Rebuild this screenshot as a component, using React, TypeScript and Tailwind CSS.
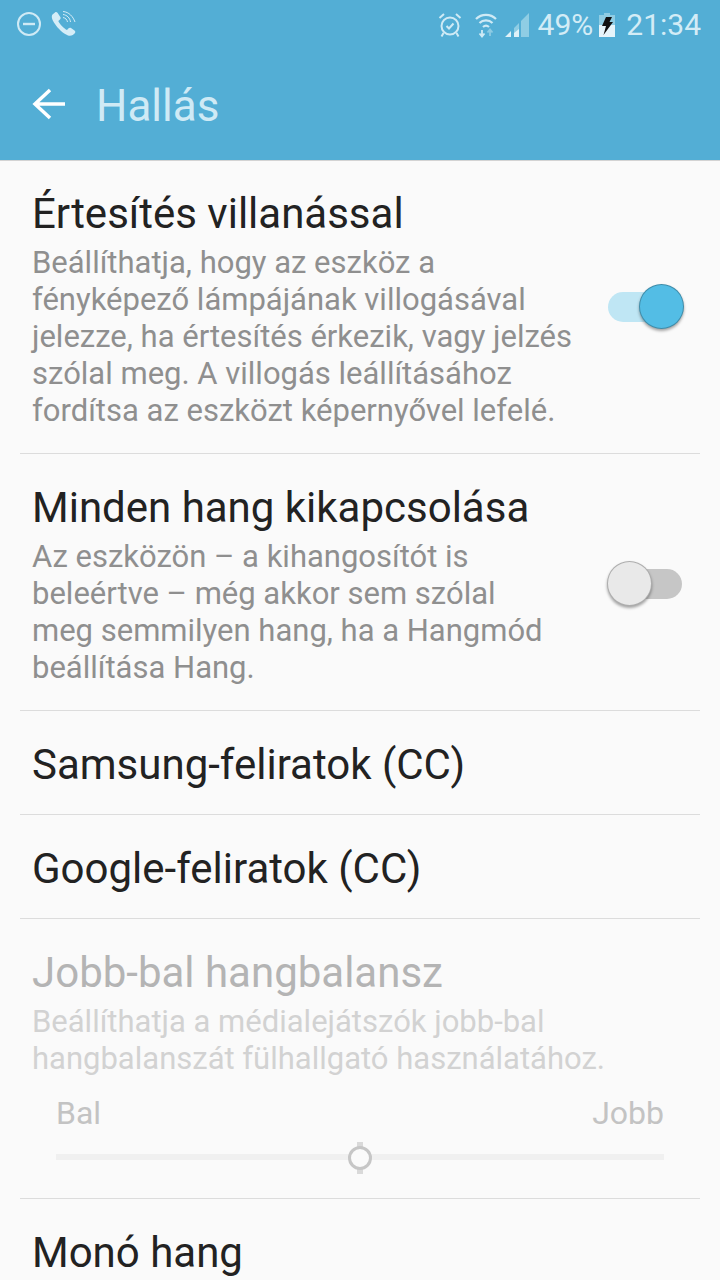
const FONT = "font-['Roboto',sans-serif]";

// státuszsor ikonok
function DndIcon() {
  return (
    <svg width="26" height="26" viewBox="0 0 26 26" fill="none" stroke="#cfeaf5" strokeWidth="2">
      <circle cx="13" cy="13" r="11" />
      <path d="M7 13h12" strokeWidth="2.4" />
    </svg>
  );
}

function CallIcon() {
  return (
    <svg width="28" height="28" viewBox="0 0 28 28" fill="none">
      <path
        d="M5 2.5 L2.5 4.5 C1 6.5 2 10 5 14 C8 18.5 13 23.5 18 25.5 C21 26.5 23.5 25 25 23 C25.5 22 25.3 21.3 24.5 20.6 L21 18 C20 17.4 19.2 17.6 18.6 18.3 L17 20 C14.5 19 9.5 14 8.3 11 L10 9.4 C10.8 8.6 10.8 7.8 10.3 7 L7.5 2.8 C6.8 2 5.8 1.9 5 2.5 Z"
        fill="#d5edf7"
      />
      <path d="M13 7.5 C15.5 8 17 9.5 17.5 12" stroke="#d5edf7" strokeWidth="1" />
      <path d="M13 4.5 C17 5 20 8 20.5 12" stroke="#d5edf7" strokeWidth="1" />
      <path d="M13 1.5 C19 2 23 6.5 25 12" stroke="#d5edf7" strokeWidth="1" />
    </svg>
  );
}

function AlarmIcon() {
  return (
    <svg width="24" height="26" viewBox="0 0 24 26" fill="none" stroke="#cfeaf5" strokeWidth="2">
      <circle cx="12" cy="14" r="8.5" />
      <path d="M8.5 14l2.5 2.5 4.5-5" />
      <path d="M1.5 6 L6 2 M22.5 6 L18 2" />
      <path d="M5.5 21l-2 3.5 M18.5 21l2 3.5" />
    </svg>
  );
}

function WifiIcon() {
  return (
    <svg width="22" height="26" viewBox="0 0 22 26" fill="none" stroke="#cfeaf5" strokeWidth="2.2">
      <path d="M1 7 C6.5 1.5 15.5 1.5 21 7" />
      <path d="M4.5 11 C8 7.5 14 7.5 17.5 11" />
      <path d="M8 15 C9.8 13.4 12.2 13.4 14 15" />
      <path d="M7 18v6 M4.5 21.5 L7 24.5 L9.5 21.5" strokeWidth="1.8" />
      <path d="M15 24v-6 M12.5 20.5 L15 17.5 L17.5 20.5" strokeWidth="1.8" stroke="#8dcbe3" />
    </svg>
  );
}

function SignalIcon() {
  return (
    <svg width="24" height="24" viewBox="0 0 24 24">
      <path d="M16 8 L24 0 V24 H16 Z M9 15 L14 10 V24 H9 Z" fill="#8fcde4" />
      <path d="M0 24 L6 18 V24 Z M9 24 V20 L14 16 V24 Z" fill="#dff1f8" />
    </svg>
  );
}

function BatteryIcon() {
  return (
    <svg width="16" height="24" viewBox="0 0 16 24">
      <path d="M5 0h6v2h5v22H0V2h5z" fill="#8fcde4" />
      <path d="M0 12h16v12H0z" fill="#e6f4fa" />
      <path d="M7 4 H13 L10.5 9 H14 L4.5 22 L7 13 H3 Z" fill="#111" />
    </svg>
  );
}

function Toggle({ on }: { on: boolean }) {
  return (
    <div className="relative h-[30px] w-[76px] shrink-0">
      <div className={`absolute top-0 h-[30px] w-[60px] rounded-full ${on ? "left-0 bg-[#bfe6f4]" : "left-[14px] bg-[#c6c6c6]"}`} />
      <div
        className={`absolute top-[-8px] h-[45px] w-[45px] rounded-full border border-black/25 shadow-[0_2px_3px_rgba(0,0,0,0.35)] ${
          on ? "left-[31px] bg-[#53bde5]" : "left-[-1px] bg-[#e9e9e9]"
        }`}
      />
    </div>
  );
}

function Title({ children, muted }: { children: React.ReactNode; muted?: boolean }) {
  return <div className={`text-[42px] leading-[48px] ${muted ? "text-[#b4b4b4]" : "text-[#222222]"}`}>{children}</div>;
}

function Desc({ lines, muted }: { lines: string[]; muted?: boolean }) {
  return (
    <div className={`mt-[6px] text-[31px] leading-[37px] ${muted ? "text-[#d2d2d2]" : "text-[#8f8f8f]"}`}>
      {lines.map((l) => (
        <div key={l} className="whitespace-nowrap">
          {l}
        </div>
      ))}
    </div>
  );
}

function PlainRow({ title }: { title: string }) {
  return (
    <div className="mx-5 flex h-[104px] items-center border-b border-[#dcdcdc] px-3 pt-[5px]">
      <Title>{title}</Title>
    </div>
  );
}

export default function App() {
  return (
    <div className={`${FONT} h-[1280px] w-[720px] overflow-hidden bg-[#fafafa]`}>
      {/* fejléc */}
      <div className="relative z-10 h-[161px] bg-[#53aed5] border-b border-[#d3d3d3]">
        <div className="flex h-[48px] items-center justify-between pl-[16px] pr-[19px]">
          <div className="flex items-center gap-[8px]">
            <DndIcon />
            <CallIcon />
          </div>
          <div className="flex items-center pt-[2px] text-[#d3ecf6]">
            <AlarmIcon />
            <div className="ml-[13px]"><WifiIcon /></div>
            <div className="ml-[8px]"><SignalIcon /></div>
            <span className="ml-[9px] text-[30px] leading-none">49%</span>
            <div className="ml-[6px]"><BatteryIcon /></div>
            <span className="ml-[11px] text-[30px] leading-none">21:34</span>
          </div>
        </div>
        <div className="flex h-[112px] items-center pl-[32px]">
          <svg width="33" height="32" viewBox="0 0 33 32" fill="none" stroke="#ffffff" strokeWidth="3.5" className="mb-[1px]">
            <path d="M33 16H3 M18 2 L3 16 L18 30" />
          </svg>
          <span className="ml-[31px] mt-[4px] text-[44px] leading-none text-[#cfeaf5]">Hallás</span>
        </div>
      </div>

      {/* Értesítés villanással */}
      <div className="mx-5 flex h-[293px] items-center justify-between border-b border-[#dcdcdc] pl-3 pr-[16px]">
        <div className="self-start pt-[29px]">
          <Title>Értesítés villanással</Title>
          <Desc
            lines={[
              "Beállíthatja, hogy az eszköz a",
              "fényképező lámpájának villogásával",
              "jelezze, ha értesítés érkezik, vagy jelzés",
              "szólal meg. A villogás leállításához",
              "fordítsa az eszközt képernyővel lefelé.",
            ]}
          />
        </div>
        <Toggle on />
      </div>

      {/* Minden hang kikapcsolása */}
      <div className="mx-5 flex h-[257px] items-center justify-between border-b border-[#dcdcdc] pl-3 pr-[16px]">
        <div className="self-start pt-[30px]">
          <Title>Minden hang kikapcsolása</Title>
          <Desc
            lines={[
              "Az eszközön – a kihangosítót is",
              "beleértve – még akkor sem szólal",
              "meg semmilyen hang, ha a Hangmód",
              "beállítása Hang.",
            ]}
          />
        </div>
        <div className="mt-[4px]"><Toggle on={false} /></div>
      </div>

      <PlainRow title="Samsung-feliratok (CC)" />
      <PlainRow title="Google-feliratok (CC)" />

      {/* Jobb-bal hangbalansz */}
      <div className="mx-5 h-[280px] border-b border-[#dcdcdc] px-3 pt-[30px]">
        <Title muted>Jobb-bal hangbalansz</Title>
        <Desc muted lines={["Beállíthatja a médialejátszók jobb-bal", "hangbalanszát fülhallgató használatához."]} />
        <div className="mt-[18px] flex justify-between px-[24px] text-[32px] leading-[36px] text-[#c3c3c3]">
          <span>Bal</span>
          <span>Jobb</span>
        </div>
        <div className="relative mx-[24px] mt-[23px] h-[6px] bg-[#f0f0f0]">
          <div className="absolute left-[301px] top-[-12px] h-[32px] w-[6px] bg-[#d9d9d9]" />
          <div className="absolute left-[292px] top-[-8px] h-[24px] w-[24px] rounded-full border-[3px] border-[#c6c6c6] bg-[#fafafa]" />
        </div>
      </div>

      <div className="mx-5 px-3 pt-[30px]">
        <Title>Monó hang</Title>
      </div>
    </div>
  );
}
